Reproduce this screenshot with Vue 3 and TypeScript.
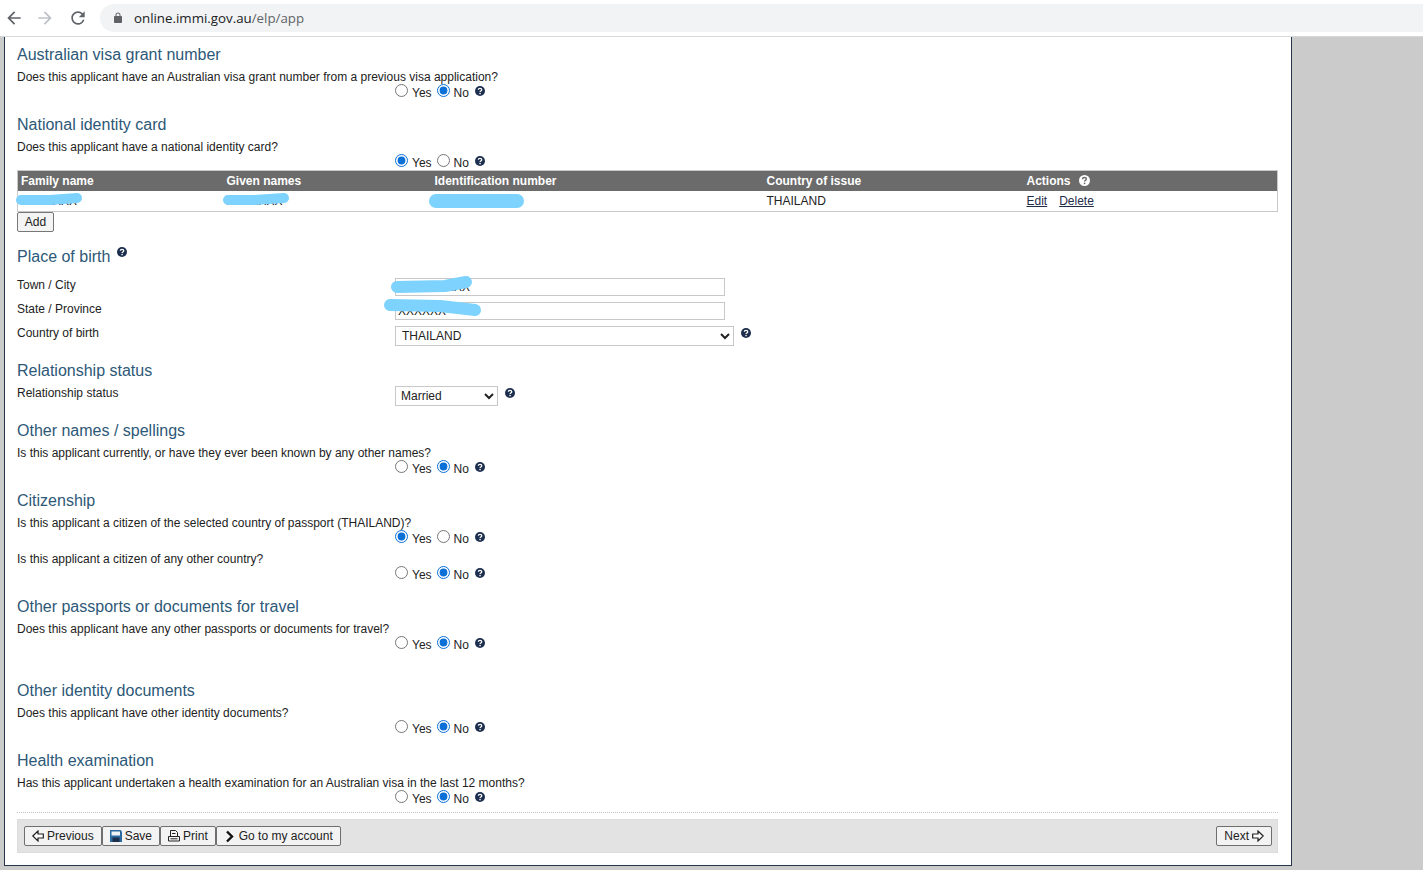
<script setup lang="ts">
interface Question {
  text: string
  answer: 'yes' | 'no'
  id: string
}
interface Section {
  title: string
  roomy?: boolean
  questions: Question[]
}

const rows: Section[] = [
  {
    title: 'Other names / spellings',
    questions: [{ id: 'names', answer: 'no', text: 'Is this applicant currently, or have they ever been known by any other names?' }],
  },
  {
    title: 'Citizenship',
    questions: [
      { id: 'cit1', answer: 'yes', text: 'Is this applicant a citizen of the selected country of passport (THAILAND)?' },
      { id: 'cit2', answer: 'no', text: 'Is this applicant a citizen of any other country?' },
    ],
  },
  {
    title: 'Other passports or documents for travel',
    roomy: true,
    questions: [{ id: 'pass', answer: 'no', text: 'Does this applicant have any other passports or documents for travel?' }],
  },
  {
    title: 'Other identity documents',
    questions: [{ id: 'docs', answer: 'no', text: 'Does this applicant have other identity documents?' }],
  },
  {
    title: 'Health examination',
    questions: [{ id: 'health', answer: 'no', text: 'Has this applicant undertaken a health examination for an Australian visa in the last 12 months?' }],
  },
]
</script>

<template>
  <div class="page">
    <svg class="defs" width="0" height="0" aria-hidden="true">
      <symbol id="help" viewBox="0 0 20 20">
        <circle cx="10" cy="10" r="10" fill="#1d2f4f" />
        <path d="M6.600 7.600c0-2 1.500-3.100 3.500-3.100s3.400 1.100 3.400 2.900c0 2.600-3.400 2.300-3.400 4.600" fill="none" stroke="#fff" stroke-width="2.500" />
        <circle cx="10.100" cy="15.200" r="1.600" fill="#fff" />
      </symbol>
      <symbol id="help-light" viewBox="0 0 20 20">
        <circle cx="10" cy="10" r="10" fill="#fff" />
        <path d="M6.600 7.600c0-2 1.500-3.100 3.500-3.100s3.400 1.100 3.400 2.900c0 2.600-3.400 2.300-3.400 4.600" fill="none" stroke="#6b6b6b" stroke-width="2.500" />
        <circle cx="10.100" cy="15.200" r="1.600" fill="#6b6b6b" />
      </symbol>
    </svg>

    <header class="browser">
      <svg class="nav" viewBox="0 0 24 24" width="20" height="20"><path fill="#5f6368" d="M20 11H7.830l5.590-5.590L12 4l-8 8 8 8 1.410-1.410L7.830 13H20v-2z" /></svg>
      <svg class="nav fwd" viewBox="0 0 24 24" width="20" height="20"><path fill="#bdc1c6" d="M4 11h12.170l-5.590-5.590L12 4l8 8-8 8-1.410-1.410L16.170 13H4v-2z" /></svg>
      <svg class="nav reload" viewBox="0 0 24 24" width="20" height="20"><path fill="#5f6368" d="M17.650 6.350A7.958 7.958 0 0 0 12 4c-4.420 0-7.990 3.580-7.990 8s3.570 8 7.990 8c3.730 0 6.840-2.550 7.730-6h-2.080A5.990 5.990 0 0 1 12 18c-3.310 0-6-2.690-6-6s2.690-6 6-6c1.660 0 3.140.690 4.220 1.780L13 11h7V4l-2.350 2.350z" /></svg>
      <div class="address">
        <svg viewBox="0 0 24 24" width="12" height="12"><path fill="#5f6368" d="M18 8h-1V6c0-2.760-2.240-5-5-5S7 3.240 7 6v2H6c-1.100 0-2 .9-2 2v10c0 1.100.9 2 2 2h12c1.100 0 2-.9 2-2V10c0-1.100-.9-2-2-2zM9 6c0-1.660 1.340-3 3-3s3 1.340 3 3v2H9V6z" /></svg>
        <span class="url">online.immi.gov.au<span class="path">/elp/app</span></span>
      </div>
    </header>

    <main class="panel">
      <section class="section">
        <h2>Australian visa grant number</h2>
        <p class="question">Does this applicant have an Australian visa grant number from a previous visa application?</p>
        <div class="answers">
          <input type="radio" name="visa" />
          <label>Yes</label>
          <input type="radio" name="visa" checked />
          <label>No</label>
          <svg class="help"><use href="#help" /></svg>
        </div>
      </section>

      <section class="section">
        <h2>National identity card</h2>
        <p class="question">Does this applicant have a national identity card?</p>
        <div class="answers">
          <input type="radio" name="card" checked />
          <label>Yes</label>
          <input type="radio" name="card" />
          <label>No</label>
          <svg class="help"><use href="#help" /></svg>
        </div>
        <table class="grid">
          <colgroup>
            <col class="c1" /><col class="c2" /><col class="c3" /><col class="c4" /><col />
          </colgroup>
          <thead>
            <tr>
              <th>Family name</th>
              <th>Given names</th>
              <th>Identification number</th>
              <th>Country of issue</th>
              <th>Actions <svg class="help head-help"><use href="#help-light" /></svg></th>
            </tr>
          </thead>
          <tbody>
            <tr>
              <td>XXXXXXX</td>
              <td>XXXXXXX</td>
              <td>XXXXXXXXXX</td>
              <td>THAILAND</td>
              <td><a href="#">Edit</a><a href="#" class="second">Delete</a></td>
            </tr>
          </tbody>
        </table>
        <button class="add" type="button">Add</button>
      </section>

      <section class="section">
        <h2 class="with-help">Place of birth <svg class="help title-help"><use href="#help" /></svg></h2>
        <div class="form-rows">
          <div class="form-row">
            <label>Town / City</label>
            <input class="text" type="text" value="XXXXXXXXX" />
          </div>
          <div class="form-row">
            <label>State / Province</label>
            <input class="text" type="text" value="XXXXXX" />
          </div>
          <div class="form-row">
            <label>Country of birth</label>
            <select class="country"><option>THAILAND</option></select>
            <svg class="help select-help"><use href="#help" /></svg>
          </div>
        </div>
      </section>

      <section class="section">
        <h2>Relationship status</h2>
        <div class="form-rows near">
          <div class="form-row">
            <label>Relationship status</label>
            <select class="status"><option>Married</option></select>
            <svg class="help select-help"><use href="#help" /></svg>
          </div>
        </div>
      </section>

      <section
        v-for="s in rows"
        :key="s.title"
        class="section"
        :class="{ roomy: s.roomy }"
      >
        <h2>{{ s.title }}</h2>
        <template v-for="q in s.questions" :key="q.id">
          <p class="question">{{ q.text }}</p>
          <div class="answers">
            <input type="radio" :name="q.id" :checked="q.answer === 'yes'" />
            <label>Yes</label>
            <input type="radio" :name="q.id" :checked="q.answer === 'no'" />
            <label>No</label>
            <svg class="help"><use href="#help" /></svg>
          </div>
        </template>
      </section>

      <div class="dotted"></div>

      <footer class="actions">
        <div class="group">
          <button type="button">
            <svg width="12" height="12" viewBox="0 0 12 12"><path d="M.8 6L6 1v3h5.300v4H6v3z" fill="#fff" stroke="#222" stroke-width="1.200" /></svg>Previous
          </button>
          <button type="button">
            <svg width="12" height="12" viewBox="0 0 12 12"><path d="M0 0h10.500L12 1.500V12H0z" fill="#2a6a9e" /><path d="M1.500 1.500h8.500v4H1.500z" fill="#eef2f5" /><path d="M2.500 7.500h7V12h-7z" fill="#1c2f4a" /></svg>Save
          </button>
          <button type="button">
            <svg width="12" height="12" viewBox="0 0 12 12"><path d="M2.500 6V.5h5l2 2V6M4 3.500h3.500M.5 6.500h11v4.500H.5zM2.500 8.800h7" fill="none" stroke="#222" /></svg>Print
          </button>
          <button type="button">
            <svg width="12" height="13" viewBox="0 0 12 13"><path d="M3 1.500l5 5-5 5" fill="none" stroke="#111" stroke-width="2.400" /></svg>Go to my account
          </button>
        </div>
        <button type="button" class="next">
          Next<svg width="12" height="12" viewBox="0 0 12 12"><path d="M11.200 6L6 1v3H.7v4H6v3z" fill="#fff" stroke="#222" stroke-width="1.200" /></svg>
        </button>
      </footer>
    </main>

    <svg class="marks" width="1423" height="870" viewBox="0 0 1423 870" aria-hidden="true">
      <g fill="none" stroke="#7dd3fe" stroke-linecap="round" stroke-linejoin="round">
        <path stroke-width="10" d="M21 200 L50 200 L77 198" />
        <path stroke-width="10" d="M228 200 L254 200 L284 198" />
        <path stroke-width="14" d="M436 201 L517 201" />
        <path stroke-width="12" d="M397 287 L445 286 L466 282" />
        <path stroke-width="12" d="M390 305 L440 306 L475 310" />
      </g>
    </svg>
  </div>
</template>

<style scoped>
.page {
  position: relative;
  width: 1423px;
  height: 870px;
  overflow: hidden;
  background: #cbcbcb;
  font-family: "Liberation Sans", Arial, sans-serif;
  font-size: 12px;
  color: #222;
}
.defs {
  position: absolute;
}
.browser {
  height: 36px;
  background: #fff;
  border-bottom: 1px solid #d6d8da;
  display: flex;
  align-items: center;
  padding: 0 0 0 4px;
}
.nav {
  flex: none;
}
.fwd {
  margin-left: 11px;
}
.reload {
  margin-left: 13px;
}
.address {
  flex: 1;
  height: 28px;
  margin-left: 12px;
  border-radius: 14px 0 0 14px;
  background: #f1f3f4;
  display: flex;
  align-items: center;
  padding-left: 12px;
  gap: 10px;
}
.url {
  font-family: "Open Sans", sans-serif;
  font-size: 13.300px;
  color: #202124;
}
.path {
  color: #5f6368;
}
.panel {
  width: 1288px;
  height: 829px;
  margin-left: 4px;
  box-sizing: border-box;
  background: #fff;
  border: 1px solid #26364a;
  border-top: 0;
  padding: 8px 13px 0 12px;
}
.section {
  margin-top: 15px;
}
.section:first-child {
  margin-top: 0;
}
.section.roomy {
  padding-bottom: 14px;
}
h2 {
  margin: 0;
  font-size: 16px;
  font-weight: 400;
  line-height: 20px;
  color: #2d5877;
}
.title-help {
  position: relative;
  top: -5px;
  margin-left: 2px;
}
.question {
  margin: 5px 0 0;
  line-height: 14px;
  font-size: 12px;
}
.answers + .question {
  margin-top: 6px;
}
.answers {
  height: 16px;
  padding-left: 378px;
  display: flex;
  align-items: center;
}
.answers input {
  width: 13px;
  height: 13px;
  margin: 0;
  position: relative;
  top: -2px;
  accent-color: #0a6fd6;
}
.answers label {
  margin: 0 5px 0 4px;
  position: relative;
  top: 1px;
}
.help {
  display: inline-block;
  width: 10px;
  height: 10px;
  flex: none;
}
.answers .help {
  margin-left: 1px;
  position: relative;
  top: -1px;
}
.grid {
  width: 1261px;
  table-layout: fixed;
  border-collapse: collapse;
  border: 1px solid #c9c9c9;
  font-size: 12px;
}
.c1 {
  width: 206px;
}
.c2 {
  width: 208px;
}
.c3 {
  width: 332px;
}
.c4 {
  width: 260px;
}
.grid th {
  height: 20px;
  padding: 0 3px;
  background: #6b6b6b;
  color: #fff;
  font-weight: 700;
  text-align: left;
}
.grid td {
  height: 20px;
  padding: 0 3px;
}
.grid .head-help {
  width: 11px;
  height: 11px;
  margin-left: 5px;
  vertical-align: -1px;
}
.grid a {
  color: #1f2d4a;
}
.grid a.second {
  margin-left: 12px;
}
.add {
  display: block;
  height: 20px;
  width: 37px;
  padding: 0;
  font: 12px "Liberation Sans", Arial, sans-serif;
  color: #222;
  background: #f4f4f4;
  border: 1px solid #777;
  border-radius: 2px;
}
.form-rows {
  margin-top: 11px;
  display: flex;
  flex-direction: column;
  gap: 6px;
}
.form-rows.near {
  margin-top: 5px;
}
.form-row {
  display: flex;
  align-items: flex-start;
}
.form-row label {
  width: 378px;
  line-height: 14px;
  flex: none;
}
.text {
  width: 330px;
  height: 18px;
  box-sizing: border-box;
  padding: 0 2px;
  border: 1px solid #c8c8c8;
  font: 12px "Liberation Sans", Arial, sans-serif;
  color: #222;
}
select {
  height: 20px;
  box-sizing: border-box;
  padding-left: 2px;
  background: #fff;
  border: 1px solid #c8c8c8;
  font: 12px "Liberation Sans", Arial, sans-serif;
  color: #222;
}
.country {
  width: 339px;
}
.status {
  width: 103px;
  padding-left: 1px;
}
.select-help {
  margin: 2px 0 0 7px;
}
.dotted {
  margin-top: 6px;
  border-top: 1px dotted #c4c4c4;
}
.actions {
  margin-top: 6px;
  height: 34px;
  box-sizing: border-box;
  background: #e3e3e3;
  border: 1px solid #dcdcdc;
  padding: 6px 5px 0 6px;
  display: flex;
  justify-content: space-between;
  align-items: flex-start;
}
.group {
  display: flex;
}
.actions button {
  height: 20px;
  padding: 0 7px;
  display: flex;
  align-items: center;
  gap: 3px;
  font: 12px "Liberation Sans", Arial, sans-serif;
  color: #222;
  background: #f3f3f3;
  border: 1px solid #6f6f6f;
  border-radius: 2px;
}
.marks {
  position: absolute;
  left: 0;
  top: 0;
  pointer-events: none;
}
</style>

<style>
body {
  margin: 0;
  background: #cbcbcb;
  overflow: hidden;
}
</style>
